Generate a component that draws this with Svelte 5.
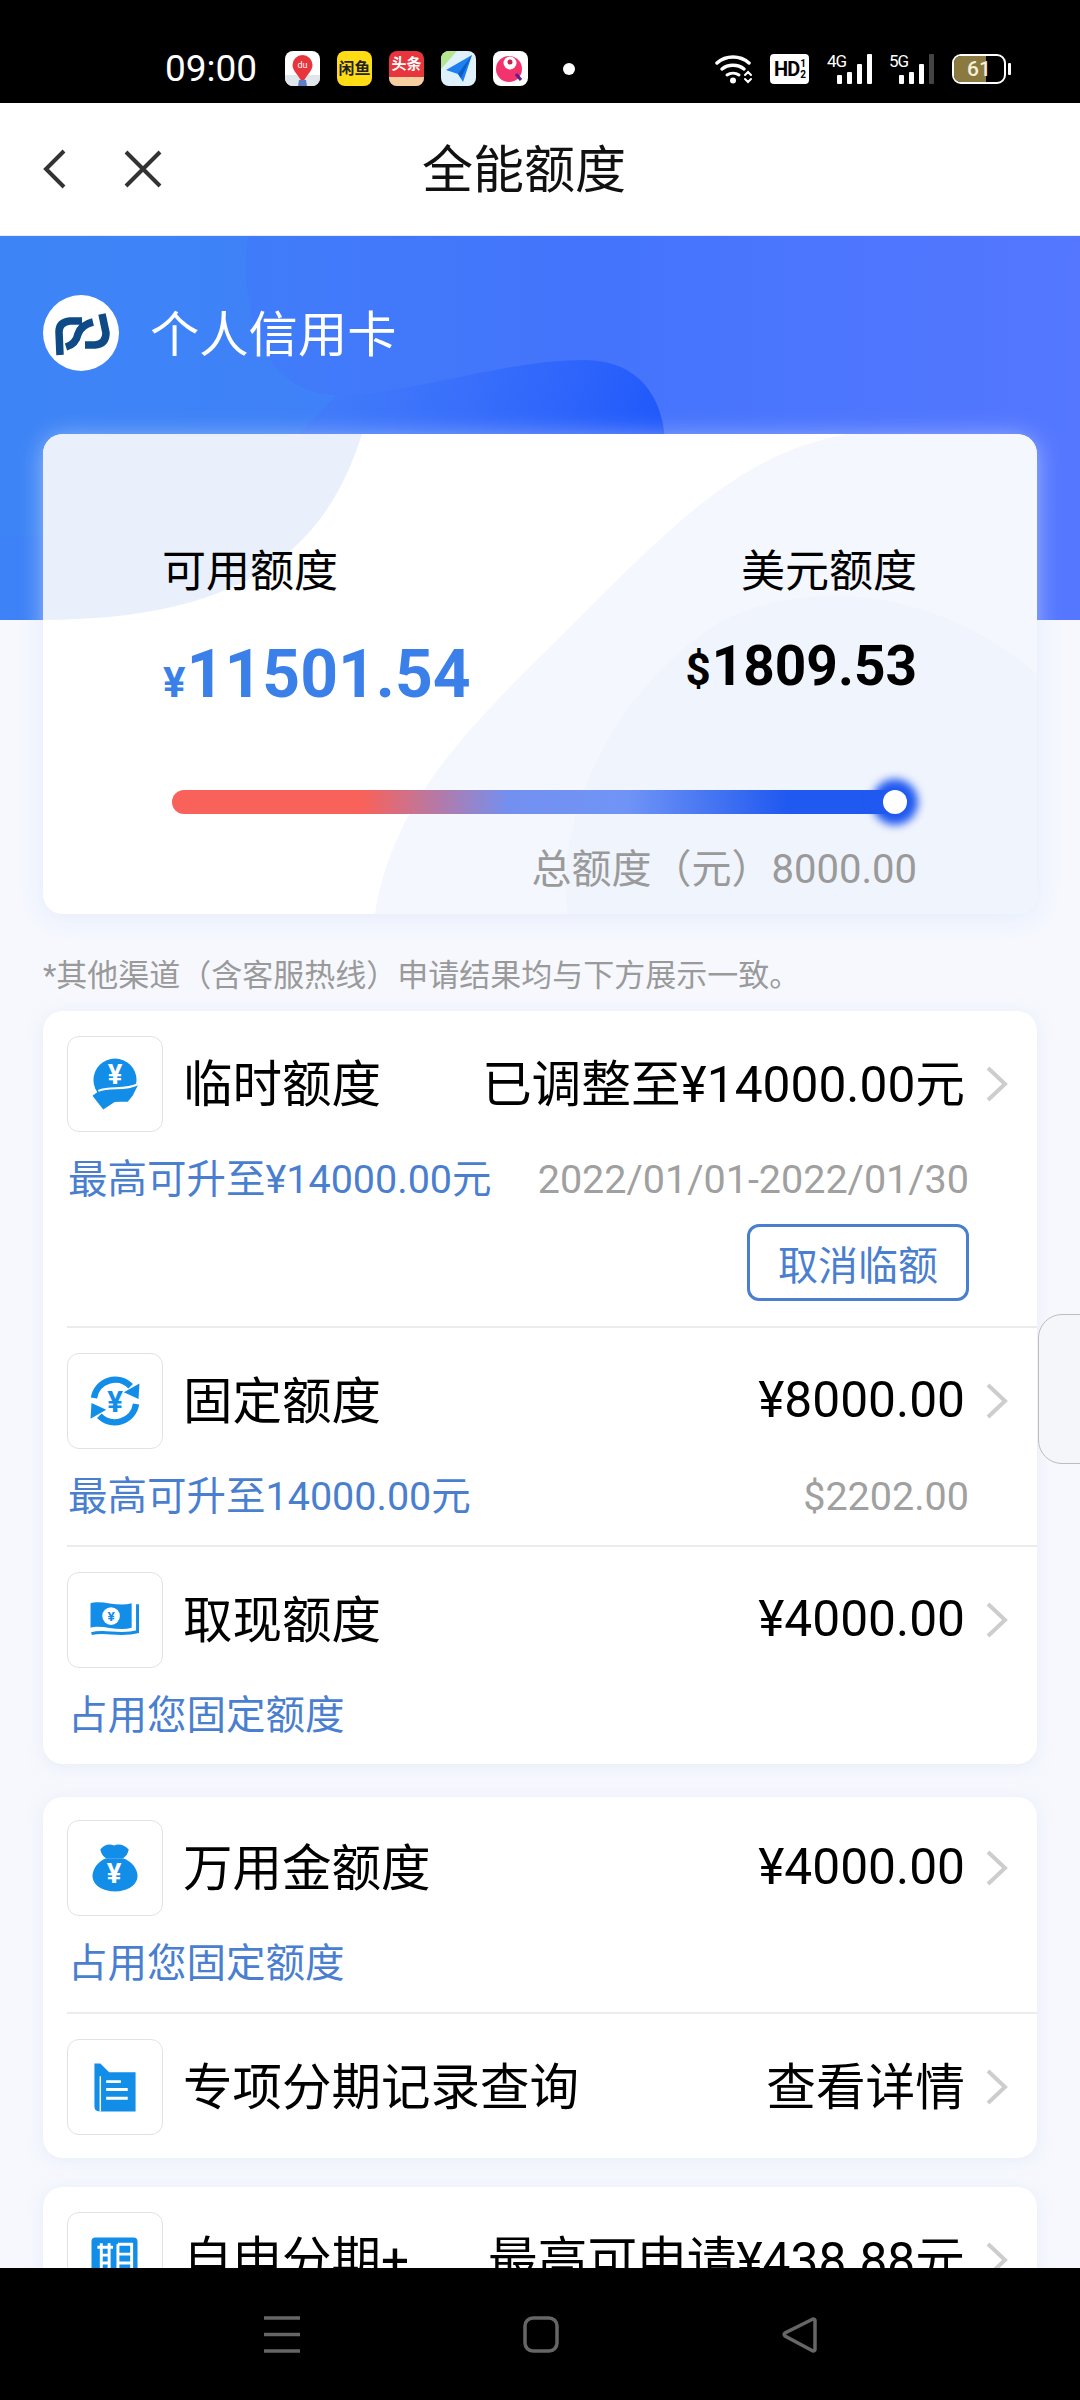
<script lang="ts">
	type Row = {
		icon: string;
		title: string;
		value: string;
		sub?: string;
		note?: string;
		cancel?: boolean;
	};

	const groups: Row[][] = [
		[
			{
				icon: 'hand',
				title: '临时额度',
				value: '已调整至¥14000.00元',
				sub: '最高可升至¥14000.00元',
				note: '2022/01/01-2022/01/30',
				cancel: true
			},
			{
				icon: 'cycle',
				title: '固定额度',
				value: '¥8000.00',
				sub: '最高可升至14000.00元',
				note: '$2202.00'
			},
			{ icon: 'cash', title: '取现额度', value: '¥4000.00', sub: '占用您固定额度' }
		],
		[
			{ icon: 'bag', title: '万用金额度', value: '¥4000.00', sub: '占用您固定额度' },
			{ icon: 'folder', title: '专项分期记录查询', value: '查看详情' }
		],
		[{ icon: 'term', title: '自申分期+', value: '最高可申请¥438.88元' }]
	];
</script>

<div class="phone">
	<header class="status">
		<span class="time">09:00</span>
		<div class="apps">
			<span class="app app-map">
				<svg viewBox="0 0 35 35"><path d="M0 24 L35 24 V35 H0Z" fill="#dfe6ec" /><path d="M17.5 4a10 10 0 0 1 10 10c0 6-6 10-10 18C13.500 24 7.500 20 7.500 14a10 10 0 0 1 10-10Z" fill="#e8343c" /><path d="M14 29h7l1 6h-9Z" fill="#5b7fc4" /><text x="17.500" y="17" text-anchor="middle" font-size="9" fill="#fff">du</text></svg>
			</span>
			<span class="app app-fish">闲鱼</span>
			<span class="app app-news">
				<span class="news-main">头条</span>
				<span class="news-foot"></span>
			</span>
			<span class="app app-send">
				<svg viewBox="0 0 35 35"><path d="M0 0H16L0 18Z" fill="#b5e58e" /><path d="M5 19 L31 4 L22 31 L17 23Z" fill="#1d7ff0" /><path d="M17 23 L31 4 L20 27Z" fill="#0c5fc8" /></svg>
			</span>
			<span class="app app-pink">
				<svg viewBox="0 0 35 35"><circle cx="16" cy="18" r="13" fill="#f2336e" /><circle cx="17" cy="12" r="6.500" fill="#fff" /><circle cx="17" cy="11" r="2.500" fill="#c9244f" /><path d="M23 23l5 6" stroke="#5c1f8a" stroke-width="3" /></svg>
			</span>
			<span class="dot"></span>
		</div>
		<div class="sys">
			<svg class="wifi" viewBox="0 0 38 30" fill="none" stroke="#fff" stroke-linecap="round">
				<path d="M2 9C11 1 25 1 34 9" stroke-width="3.500" />
				<path d="M7 15c6-5 16-5 22 0" stroke-width="3.500" />
				<path d="M12 21c3.500-2.500 8.500-2.500 12 0" stroke-width="3" />
				<circle cx="18" cy="26.500" r="3" fill="#fff" stroke="none" />
				<path d="M30 21l3-3 3 3M30 25l3 3 3-3" stroke-width="2" />
			</svg>
			<span class="hd">HD<span class="frac">1<br />2</span></span>
			<span class="net">
				<small>4G</small>
				<i class="b1"></i><i class="b2"></i><i class="b3"></i><i class="b4"></i>
			</span>
			<span class="net">
				<small>5G</small>
				<i class="b1"></i><i class="b2"></i><i class="b3"></i><i class="b4 off"></i>
			</span>
			<span class="battery"><span class="level"></span><span class="pct">61</span></span>
			<span class="nub"></span>
		</div>
	</header>

	<nav class="topbar">
		<svg class="back" viewBox="0 0 23 40" fill="none"><path d="M21 2 3 20l18 18" /></svg>
		<svg class="close" viewBox="0 0 38 38" fill="none"><path d="M2 2l34 34M36 2 2 36" /></svg>
		<h1>全能额度</h1>
	</nav>

	<section class="hero">
		<svg class="blob" viewBox="0 0 1080 384" preserveAspectRatio="none">
			<defs>
				<linearGradient id="blobFill" gradientUnits="userSpaceOnUse" x1="340" y1="140" x2="640" y2="250">
					<stop offset="0" stop-color="#2f68fa" stop-opacity="0" />
					<stop offset="1" stop-color="#1f58fb" />
				</linearGradient>
			</defs>
			<path d="M0 0H248C240 60 255 158 337 159L200 300H0Z" fill="#3d88f5" opacity="0.5" />
			<path d="M337 159C405 160 500 124 585 124C640 124 668 164 665 220C664 245 660 270 658 300L300 300L280 159Z" fill="url(#blobFill)" />
		</svg>
		<div class="brand">
			<svg class="logo" viewBox="8 8 76 76">
				<circle cx="46" cy="46" r="38" fill="#fff" />
				<g fill="none" stroke="#0e4a86" stroke-width="7.500">
					<path d="M25 68L24 45Q24 35 35 34H47" />
					<path d="M58 35Q46 38 43 47Q41 57 31 60" />
					<path d="M50 58H60Q71 57 71 46L67 27" />
				</g>
			</svg>
			<span>个人信用卡</span>
		</div>
	</section>

	<main class="content">
		<section class="limit">
			<svg class="decor" viewBox="0 0 994 480" preserveAspectRatio="none">
				<path d="M0 0H319C290 90 230 186 0 186Z" fill="#e9f0fb" />
				<path d="M804 0C700 20 640 80 530 190C440 280 350 360 332 480H994V20Q994 0 974 0Z" fill="#f4f7fe" />
				<path d="M525 480C510 400 560 260 680 186C780 140 900 160 994 240V480Z" fill="#f0f4fc" />
			</svg>
			<div class="amounts">
				<div class="col">
					<span class="label">可用额度</span>
					<span class="cny"><em>¥</em>11501.54</span>
				</div>
				<div class="col end">
					<span class="label">美元额度</span>
					<span class="usd"><em>$</em>1809.53</span>
				</div>
			</div>
			<div class="track"><span class="knob"></span></div>
			<p class="total">总额度（元）8000.00</p>
		</section>

		<p class="notice">*其他渠道（含客服热线）申请结果均与下方展示一致。</p>

		{#each groups as rows, i}
			<section class="card" class:mid={i === 1}>
				{#each rows as row}
					<div class="row" class:nosub={!row.sub}>
						<div class="head">
							<span class="icon">
								<svg viewBox="0 0 96 96">
									{#if row.icon === 'hand'}
										<circle cx="48" cy="44" r="22" fill="#128de8" />
										<path d="M25 60L33 54C44 50 56 55 72 48L66 60L61 66H48L36 74Z" fill="#128de8" />
										<path d="M31 55C44 49 56 56 72 48" fill="none" stroke="#fff" stroke-width="2" />
										<text x="48" y="48" class="yen" font-size="28">¥</text>
									{:else if row.icon === 'cycle'}
										<path d="M26.500 45A22 22 0 0 1 64 33" fill="none" stroke="#128de8" stroke-width="6.500" />
										<path d="M69.500 51A22 22 0 0 1 32 63" fill="none" stroke="#128de8" stroke-width="6.500" />
										<path d="M57 39L73 30L72 46Z M39 57L23 66L24 50Z" fill="#128de8" />
										<text x="48" y="59" class="yen blue" font-size="30">¥</text>
									{:else if row.icon === 'cash'}
										<path d="M23 31C34 27 50 35 65 31V56C50 60 34 52 23 56Z" fill="#128de8" />
										<circle cx="44" cy="44" r="9" fill="#fff" />
										<text x="44" y="49" class="yen blue" font-size="14">¥</text>
										<path d="M71 32V60C52 65 38 58 24 62" fill="none" stroke="#128de8" stroke-width="3" />
									{:else if row.icon === 'bag'}
										<path d="M33 29Q39 22 47 25Q55 22 62 29Q61 35 56 38H39Q34 35 33 29Z" fill="#128de8" />
										<path d="M39 38H56C65 41 71 49 71 56C71 66 60 72 48 72C36 72 25 66 25 56C25 49 31 41 39 38Z" fill="#128de8" />
										<text x="47" y="63" class="yen" font-size="28">¥</text>
									{:else if row.icon === 'folder'}
										<path d="M27 24H33L42 33H69V73H33C28 73 27 71 27 67Z" fill="#128de8" />
										<path d="M33 37V73" stroke="#fff" stroke-width="1.500" />
										<path d="M39 42.500H54M39 50.500H61M39 59.500H61" stroke="#fff" stroke-width="3" />
									{:else}
										<rect x="24" y="25" width="47" height="47" rx="4" fill="#128de8" />
										<path d="M30 35H46M34 31V58M42 31V58M34 43H42M34 51H42M29 60H47M51 32H65V62M51 32V62M51 42H65M51 51H65" stroke="#fff" stroke-width="3" fill="none" />
									{/if}
								</svg>
							</span>
							<span class="title">{row.title}</span>
							<span class="value" class:num={row.value.startsWith('¥')}>{row.value}</span>
							<svg class="chevron" viewBox="0 0 23 38" fill="none"><path d="M3 3l17 16L3 35" /></svg>
						</div>
						{#if row.sub}
							<div class="sub">
								<span class="hint">{row.sub}</span>
								{#if row.note}<span class="note">{row.note}</span>{/if}
							</div>
						{/if}
						{#if row.cancel}
							<div class="actions"><button type="button">取消临额</button></div>
						{/if}
					</div>
				{/each}
			</section>
		{/each}
	</main>

	<aside class="handle"></aside>

	<footer class="softkeys">
		<svg class="menu" viewBox="0 0 36 37"><path d="M0 2h36M0 18.500h36M0 35h36" /></svg>
		<svg class="home" viewBox="0 0 36 37"><rect x="2" y="2" width="32" height="33" rx="8" /></svg>
		<svg class="tri" viewBox="0 0 36 37"><path d="M32 3 4 17c-1 1-1 2 0 3l28 15c1 0 2 0 2-2V5c0-2-1-2-2-2Z" /></svg>
	</footer>
</div>

<style>
	:global(body) {
		margin: 0;
		background: #f6f8fe;
	}

	.phone {
		position: relative;
		width: 1080px;
		height: 2400px;
		overflow: hidden;
		background: #f6f8fe;
		font-family: Roboto, 'Noto Sans CJK SC', sans-serif;
		color: #000;
	}

	.status {
		display: flex;
		align-items: center;
		height: 103px;
		padding: 34px 69px 0 165px;
		box-sizing: border-box;
		background: #000;
		color: #fff;
	}

	.time {
		width: 120px;
		font-size: 37px;
		line-height: 37px;
	}

	.apps {
		display: flex;
		align-items: center;
		gap: 17px;
	}

	.app {
		display: block;
		width: 35px;
		height: 35px;
		border-radius: 8px;
		overflow: hidden;
		background: #fff;
	}

	.app svg {
		display: block;
		width: 35px;
		height: 35px;
	}

	.app-fish {
		background: #ffdc14;
		color: #222;
		font-size: 16px;
		line-height: 35px;
		text-align: center;
		font-weight: 700;
		white-space: nowrap;
	}

	.app-news {
		display: flex;
		flex-direction: column;
		background: #e8343c;
	}

	.news-main {
		height: 26px;
		color: #fff;
		font-size: 15px;
		line-height: 26px;
		text-align: center;
		font-weight: 700;
		white-space: nowrap;
	}

	.news-foot {
		flex: 1;
		background: #f5cf9f;
	}

	.app-send {
		background: #dff1fb;
	}

	.dot {
		width: 12px;
		height: 12px;
		border-radius: 50%;
		background: #fff;
		margin-left: 18px;
	}

	.sys {
		display: flex;
		align-items: center;
		margin-left: auto;
	}

	.wifi {
		width: 38px;
		height: 30px;
	}

	.hd {
		display: flex;
		align-items: center;
		justify-content: center;
		width: 39px;
		height: 30px;
		margin-left: 17px;
		border-radius: 4px;
		background: #fff;
		color: #000;
		font-size: 20px;
		font-weight: 700;
		letter-spacing: -1px;
	}

	.frac {
		font-size: 10px;
		line-height: 11px;
		margin-left: 1px;
		text-align: center;
	}

	.net {
		position: relative;
		display: flex;
		align-items: flex-end;
		gap: 5px;
		width: 39px;
		height: 30px;
		margin-left: 24px;
		justify-content: flex-end;
	}

	.net + .net {
		margin-left: 23px;
	}

	.net small {
		position: absolute;
		left: -6px;
		top: -2px;
		font-size: 17px;
		line-height: 18px;
		letter-spacing: -1px;
	}

	.net i {
		display: block;
		width: 5px;
		background: #fff;
		border-radius: 1px;
	}

	.b1 { height: 9px; }
	.b2 { height: 12px; }
	.b3 { height: 20px; }
	.b4 { height: 30px; }

	.net i.off {
		background: #444;
	}

	.battery {
		position: relative;
		width: 54px;
		height: 30px;
		margin-left: 18px;
		box-sizing: border-box;
		border: 2px solid #fff;
		border-radius: 9px;
		overflow: hidden;
	}

	.level {
		position: absolute;
		left: 0;
		top: 0;
		bottom: 0;
		width: 32px;
		background: #8a7a3f;
	}

	.pct {
		position: absolute;
		left: 13px;
		top: 0;
		font-size: 21px;
		line-height: 26px;
		font-weight: 500;
		color: #f4efdc;
	}

	.nub {
		width: 3px;
		height: 12px;
		margin-left: 2px;
		border-radius: 1px;
		background: #fff;
	}

	.topbar {
		display: flex;
		align-items: center;
		height: 132px;
		padding-left: 43px;
		background: #fff;
		border-bottom: 1px solid #ececec;
	}

	.back {
		width: 23px;
		height: 40px;
	}

	.close {
		width: 38px;
		height: 38px;
		margin-left: 58px;
	}

	.topbar path {
		stroke: #333;
		stroke-width: 4;
	}

	h1 {
		margin: 3px 0 0 260px;
		font-size: 51px;
		font-weight: 400;
		line-height: 60px;
		color: #111;
	}

	.hero {
		position: relative;
		height: 384px;
		background: linear-gradient(90deg, #3d82f7 0%, #4474fc 55%, #5577ff 100%);
		overflow: hidden;
	}

	.blob {
		position: absolute;
		inset: 0;
		width: 100%;
		height: 100%;
	}

	.brand {
		position: relative;
		display: flex;
		align-items: center;
		gap: 31px;
		padding: 57px 0 0 43px;
		color: #fff;
		font-size: 49.300px;
		line-height: 76px;
	}

	.brand span {
		margin-top: 4px;
	}

	.logo {
		width: 76px;
		height: 76px;
	}

	.content {
		position: relative;
		margin-top: -186px;
		padding: 0 43px;
	}

	.limit {
		position: relative;
		overflow: hidden;
		padding: 116px 120px 24px 119px;
		border-radius: 20px;
		background: #fff;
		box-shadow: 0 3px 24px rgba(215, 226, 250, 0.6);
	}

	.decor {
		position: absolute;
		inset: 0;
		width: 100%;
		height: 100%;
	}

	.amounts {
		position: relative;
		display: flex;
		justify-content: space-between;
	}

	.col {
		display: flex;
		flex-direction: column;
		gap: 45px;
	}

	.col.end {
		align-items: flex-end;
	}

	.label {
		font-size: 44px;
		line-height: 44px;
	}

	.cny {
		margin: 3px 0 0 1px;
		font-size: 66px;
		line-height: 66px;
		font-weight: 700;
		color: #3b7fe8;
		white-space: nowrap;
	}

	.cny em {
		font-size: 42px;
		font-style: normal;
		margin-right: 1px;
	}

	.usd {
		font-size: 55px;
		line-height: 55px;
		font-weight: 700;
		white-space: nowrap;
	}

	.usd em {
		font-size: 44px;
		font-style: normal;
		margin-right: 1px;
	}

	.track {
		position: relative;
		height: 24px;
		margin: 74px 12px 0 10px;
		border-radius: 12px;
		background: linear-gradient(90deg, #f9625a 0%, #f9625a 26%, #7390f0 46%, #7094f6 62%, #2059f0 84%, #2059f0 100%);
	}

	.knob {
		position: absolute;
		right: -2px;
		top: 0;
		width: 24px;
		height: 24px;
		border-radius: 50%;
		background: #fff;
		box-shadow: 0 0 8px 11px #2059f0;
	}

	.total {
		position: relative;
		margin: 36px 0 0;
		font-size: 40px;
		line-height: 40px;
		text-align: right;
		color: #9a9a9a;
	}

	.notice {
		margin: 46px 0 19px;
		font-size: 31px;
		line-height: 32px;
		color: #9a9a9a;
		white-space: nowrap;
	}

	.card {
		border-radius: 20px;
		background: #fff;
		box-shadow: 0 2px 14px rgba(220, 226, 240, 0.5);
	}

	.card.mid {
		margin: 33px 0 29px;
	}

	.row {
		position: relative;
		padding: 25px 0 28px 24px;
	}

	.mid .row:first-child {
		padding-top: 23px;
	}

	.row.nosub {
		padding-bottom: 23px;
	}

	.row + .row {
		padding-top: 27px;
	}

	.row + .row::before {
		content: '';
		position: absolute;
		left: 24px;
		right: 0;
		top: 0;
		height: 2px;
		background: #ececec;
	}

	.head {
		display: flex;
		align-items: center;
		height: 96px;
		padding-right: 29px;
	}

	.icon {
		display: block;
		width: 96px;
		height: 96px;
		box-sizing: border-box;
		flex: none;
		border: 1px solid #e2e2e2;
		border-radius: 12px;
	}

	.icon svg {
		display: block;
		width: 94px;
		height: 94px;
	}

	.yen {
		font-family: Roboto, sans-serif;
		font-weight: 700;
		text-anchor: middle;
		fill: #fff;
	}

	.yen.blue {
		fill: #128de8;
	}

	.title {
		margin: 1px 0 0 20px;
		font-size: 49.500px;
		line-height: 60px;
		white-space: nowrap;
	}

	.value {
		margin: 1px 0 0 auto;
		font-size: 49.700px;
		line-height: 60px;
		white-space: nowrap;
	}

	.value.num {
		margin-top: -2px;
	}

	.chevron {
		flex: none;
		width: 23px;
		height: 38px;
		margin-left: 20px;
	}

	.chevron path {
		stroke: #cdcdcd;
		stroke-width: 4;
	}

	.sub {
		display: flex;
		justify-content: space-between;
		margin: 28px 68px 0 1px;
		font-size: 39.500px;
		line-height: 40px;
		white-space: nowrap;
	}

	.hint {
		color: #4a7fcf;
	}

	.note {
		color: #a0a0a0;
	}

	.actions {
		display: flex;
		justify-content: flex-end;
		margin: 24px 68px -3px 0;
	}

	button {
		width: 222px;
		height: 77px;
		padding: 0;
		border: 3px solid #4a7fcf;
		border-radius: 12px;
		background: #fff;
		color: #4a7fcf;
		font-family: inherit;
		font-size: 40px;
	}

	.handle {
		position: absolute;
		right: -2px;
		top: 1314px;
		width: 44px;
		height: 150px;
		box-sizing: border-box;
		border: 1px solid #bdbdbd;
		border-radius: 24px 0 0 24px;
		background: #f5f6fa;
	}

	.softkeys {
		position: absolute;
		left: 0;
		right: 0;
		bottom: 0;
		display: flex;
		height: 132px;
		padding: 48px 0 0 264px;
		box-sizing: border-box;
		background: #000;
	}

	.softkeys svg {
		width: 36px;
		height: 37px;
	}

	.softkeys path,
	.softkeys rect {
		fill: none;
		stroke: #666;
		stroke-width: 3.500;
	}

	.home {
		margin-left: 223px;
	}

	.tri {
		margin-left: 222px;
	}
</style>
